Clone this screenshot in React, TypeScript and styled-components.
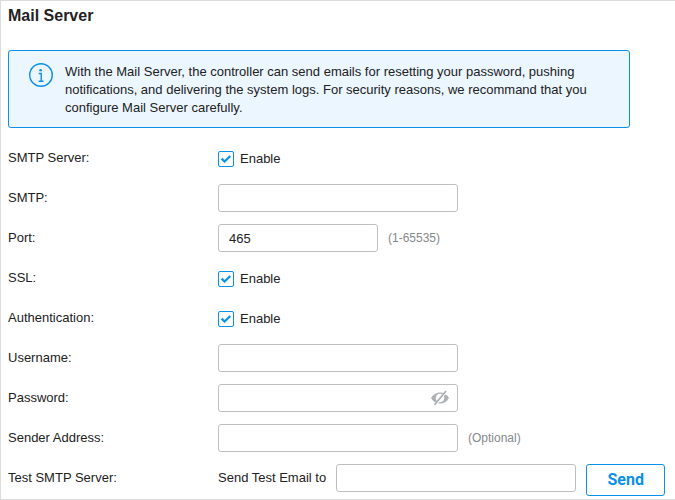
import React, { useState } from "react";
import styled, { createGlobalStyle } from "styled-components";

const GlobalStyle = createGlobalStyle`
  *, *::before, *::after {
    box-sizing: border-box;
  }
  body {
    margin: 0;
    background: #fff;
    color: #222;
    font: 13px/18px "Liberation Sans", Arial, sans-serif;
  }
  input, button {
    font: inherit;
    color: inherit;
    margin: 0;
  }
`;

const accent = "#0a90ea";

const Panel = styled.main`
  display: flex;
  flex-direction: column;
  gap: 16px;
  padding: 5px 8px 3px 7px;
  border: solid #dcdcdc;
  border-width: 1px 0 1px 1px;
`;

const Title = styled.h1`
  margin: 0 0 8px;
  font-size: 16px;
  line-height: 20px;
  font-weight: bold;
`;

const Notice = styled.section`
  display: flex;
  align-items: flex-start;
  gap: 12px;
  margin-right: 37px;
  padding: 12px 20px 10px;
  border: 1px solid ${accent};
  border-radius: 3px;
  background: #ebf6fe;
`;

const InfoIcon = styled.svg`
  flex: none;
  width: 24px;
  height: 24px;
`;

const NoticeText = styled.p`
  margin: 0;
`;

const Form = styled.form`
  display: flex;
  flex-direction: column;
  gap: 12px;
`;

const Row = styled.div`
  display: grid;
  grid-template-columns: 210px 1fr;
  align-items: start;
  min-height: 28px;
`;

const RowLabel = styled.label`
  line-height: 28px;
`;

const Controls = styled.div`
  display: flex;
  align-items: flex-start;
  gap: 10px;
`;

const TextInput = styled.input<{ $width: number }>`
  width: ${(p) => p.$width}px;
  min-width: 0;
  height: 28px;
  padding: 0 10px;
  border: 1px solid #bfbfbf;
  border-radius: 3px;
  background: #fff;
  outline: none;
  &:focus {
    border-color: ${accent};
  }
`;

const Hint = styled.span`
  color: #84898d;
  font-size: 12px;
  line-height: 28px;
`;

const InlineLabel = styled.label`
  line-height: 28px;
`;

const CheckLabel = styled.label`
  display: flex;
  align-items: center;
  gap: 6px;
  height: 28px;
  padding-top: 1px;
  cursor: pointer;
`;

const CheckBox = styled.span`
  position: relative;
  display: flex;
`;

const CheckInput = styled.input`
  appearance: none;
  width: 16px;
  height: 16px;
  border: 1px solid ${accent};
  border-radius: 2px;
  background: #fff;
  &:not(:checked) + svg {
    display: none;
  }
`;

const CheckMark = styled.svg`
  position: absolute;
  inset: 0;
  width: 16px;
  height: 16px;
  pointer-events: none;
`;

const PasswordBox = styled.div`
  position: relative;
  display: flex;
`;

const RevealButton = styled.button`
  position: absolute;
  top: 5px;
  right: 8px;
  display: flex;
  padding: 0;
  border: 0;
  background: none;
  cursor: pointer;
`;

const SendButton = styled.button`
  width: 79px;
  height: 32px;
  padding: 0;
  border: 1px solid ${accent};
  border-radius: 3px;
  background: #fff;
  color: ${accent};
  font: bold 16px/30px Roboto, "Liberation Sans", sans-serif;
  cursor: pointer;
`;

function EnableRow({ id, label }: { id: string; label: string }) {
  const [on, setOn] = useState(true);
  return (
    <Row>
      <RowLabel htmlFor={id}>{label}</RowLabel>
      <Controls>
        <CheckLabel>
          <CheckBox>
            <CheckInput
              id={id}
              type="checkbox"
              checked={on}
              onChange={(e) => setOn(e.target.checked)}
            />
            <CheckMark viewBox="0 0 16 16" aria-hidden="true">
              <path d="M3.6 7.6 6.6 10.5 12.2 5" fill="none" stroke={accent} strokeWidth="2.3" />
            </CheckMark>
          </CheckBox>
          Enable
        </CheckLabel>
      </Controls>
    </Row>
  );
}

interface TextRowProps {
  id: string;
  label: string;
  width?: number;
  initial?: string;
  hint?: string;
}

function TextRow({ id, label, width = 240, initial, hint }: TextRowProps) {
  return (
    <Row>
      <RowLabel htmlFor={id}>{label}</RowLabel>
      <Controls>
        <TextInput id={id} type="text" $width={width} defaultValue={initial} />
        {hint && <Hint>{hint}</Hint>}
      </Controls>
    </Row>
  );
}

function PasswordRow() {
  const [visible, setVisible] = useState(false);
  return (
    <Row>
      <RowLabel htmlFor="password">Password:</RowLabel>
      <Controls>
        <PasswordBox>
          <TextInput id="password" type={visible ? "text" : "password"} $width={240} />
          <RevealButton
            type="button"
            aria-label="Show password"
            aria-pressed={visible}
            onClick={() => setVisible(!visible)}
          >
            <svg width="19" height="18" viewBox="0 0 19 18" aria-hidden="true">
              <path
                fillRule="evenodd"
                fill="#aeb1b3"
                d="M0 9C2.2 5.2 5.5 3.4 9 3.4S15.800 5.200 18 9C15.800 12.800 12.500 14.600 9 14.600S2.200 12.800 0 9ZM9 4.700A4.300 4.300 0 1 0 9 13.300A4.300 4.300 0 1 0 9 4.700Z"
              />
              <path d="M14.300 3.500 5 15" stroke="#fff" strokeWidth="2.600" />
              <path d="M15 2 3.500 15.900" stroke="#aeb1b3" strokeWidth="1.700" />
            </svg>
          </RevealButton>
        </PasswordBox>
      </Controls>
    </Row>
  );
}

export default function App() {
  return (
    <>
      <GlobalStyle />
      <Panel>
        <Title>Mail Server</Title>
        <Notice>
          <InfoIcon viewBox="0 0 24 24" aria-hidden="true">
            <circle cx="12" cy="12" r="11.300" fill="none" stroke={accent} strokeWidth="1.400" />
            <circle cx="11.600" cy="7.200" r="1.300" fill={accent} />
            <path d="M9.700 10.500H12.200V18M9.700 18.300H14.500" fill="none" stroke={accent} strokeWidth="1.400" />
          </InfoIcon>
          <NoticeText>
            With the Mail Server, the controller can send emails for resetting your password, pushing
            notifications, and delivering the system logs. For security reasons, we recommand that you
            configure Mail Server carefully.
          </NoticeText>
        </Notice>
        <Form onSubmit={(e) => e.preventDefault()}>
          <EnableRow id="smtp-server" label="SMTP Server:" />
          <TextRow id="smtp" label="SMTP:" />
          <TextRow id="port" label="Port:" width={160} initial="465" hint="(1-65535)" />
          <EnableRow id="ssl" label="SSL:" />
          <EnableRow id="authentication" label="Authentication:" />
          <TextRow id="username" label="Username:" />
          <PasswordRow />
          <TextRow id="sender" label="Sender Address:" hint="(Optional)" />
          <Row>
            <RowLabel htmlFor="test-email">Test SMTP Server:</RowLabel>
            <Controls>
              <InlineLabel htmlFor="test-email">Send Test Email to</InlineLabel>
              <TextInput id="test-email" type="email" $width={240} />
              <SendButton type="submit">Send</SendButton>
            </Controls>
          </Row>
        </Form>
      </Panel>
    </>
  );
}
